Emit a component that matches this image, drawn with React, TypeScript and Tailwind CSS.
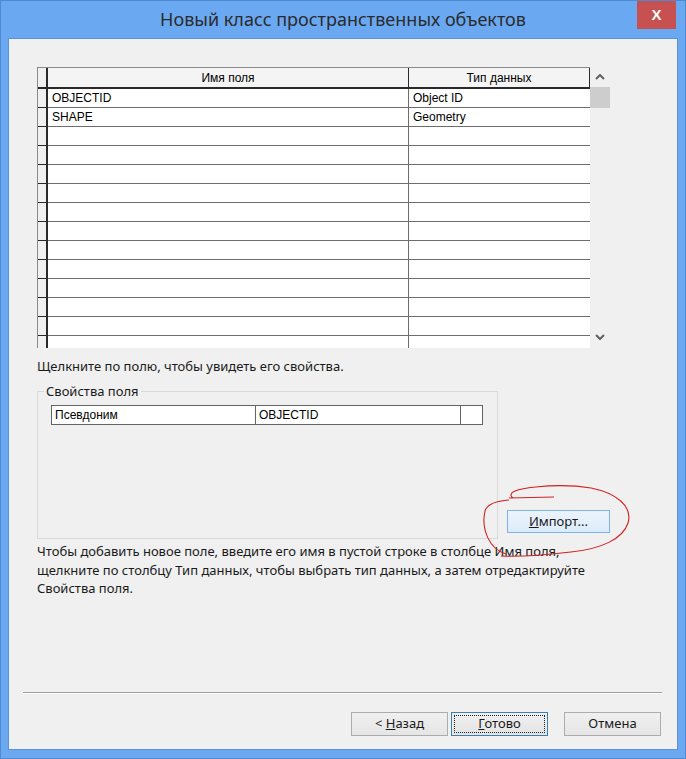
import React from 'react';

const ui = { fontFamily: '"Noto Sans", "Open Sans", sans-serif' };
const grid = { fontFamily: '"Liberation Sans", Arial, sans-serif' };

const rows: [string, string][] = [
  ['OBJECTID', 'Object ID'],
  ['SHAPE', 'Geometry'],
  ...Array.from({ length: 13 }, () => ['', ''] as [string, string]),
];

const Chevron = ({ down }: { down?: boolean }) => (
  <svg width="10" height="6" viewBox="0 0 10 6">
    <polyline
      points={down ? '1,1 5,5 9,1' : '1,5 5,1 9,5'}
      fill="none"
      stroke="#606060"
      strokeWidth="2"
    />
  </svg>
);

const Btn = ({ children, focus }: { children: React.ReactNode; focus?: boolean }) => (
  <button
    className={`w-[97px] h-[24px] text-[13px] text-[#1a1a1a] flex items-center justify-center border ${
      focus ? 'border-[#3c7fb1] bg-gradient-to-b from-[#f0f0f0] to-[#e3e3e3] p-[2px]' : 'border-[#acacac] bg-gradient-to-b from-[#f0f0f0] to-[#e5e5e5]'
    }`}
    style={ui}
  >
    {focus ? (
      <span className="w-full h-full border border-dotted border-[#222] flex items-center justify-center">{children}</span>
    ) : (
      children
    )}
  </button>
);

export default function App() {
  return (
    <div className="relative w-[686px] h-[759px] bg-[#6aa8f1] border border-[#4f8ad0] flex flex-col overflow-hidden">
      {/* title bar */}
      <div className="relative h-[37px] flex items-center justify-center shrink-0">
        <span className="text-[18px] text-[#2b2b2b]" style={ui}>
          Новый класс пространственных объектов
        </span>
        <div className="absolute right-[9px] top-0 w-[39px] h-[28px] bg-[#c75050] flex items-center justify-center">
          <span className="text-white text-[15px] font-bold" style={grid}>X</span>
        </div>
      </div>

      {/* client */}
      <div className="mx-[7px] mb-[8px] flex-1 bg-[#f0f0f0] border border-[#5b93d6] flex flex-col">
        <div className="pl-[28px] pt-[28px] flex flex-col">
          {/* grid + scrollbar */}
          <div className="flex">
            <div className="w-[553px] h-[281px] overflow-hidden bg-white border-l border-t border-[#8a8a8a] text-[12px] text-black" style={grid}>
              <div className="flex h-[21px] bg-[#f4f4f4]">
                <div className="w-[10px] border-r-2 border-b-2 border-[#2a2a2a] bg-[#f0f0f0]" />
                <div className="w-[361px] border-r border-b-2 border-[#2a2a2a] flex items-center justify-center">Имя поля</div>
                <div className="flex-1 border-b-2 border-r border-[#2a2a2a] flex items-center justify-center">Тип данных</div>
              </div>
              {rows.map(([a, b], i) => (
                <div key={i} className="flex h-[19px]">
                  <div className="w-[10px] border-r-2 border-b border-[#2a2a2a] bg-[#f0f0f0]" />
                  <div className="w-[361px] border-r border-b border-[#6d6d6d] pl-[4px] flex items-center">{a}</div>
                  <div className="flex-1 border-b border-[#6d6d6d] pl-[4px] flex items-center">{b}</div>
                </div>
              ))}
            </div>
            <div className="w-[20px] h-[281px] flex flex-col items-center">
              <div className="h-[20px] flex items-center justify-center"><Chevron /></div>
              <div className="w-[20px] h-[21px] bg-[#cdcdcd]" />
              <div className="flex-1" />
              <div className="h-[22px] flex items-center justify-center"><Chevron down /></div>
            </div>
          </div>

          <div className="mt-[10px] h-[16px] text-[13px] leading-[16px] text-[#1a1a1a]" style={ui}>
            Щелкните по полю, чтобы увидеть его свойства.
          </div>

          {/* group box + import */}
          <div className="mt-[17px] flex items-end">
            <div className="relative w-[461px] h-[148px] border border-[#d9d9d9] pl-[13px] pt-[13px]">
              <span className="absolute left-[6px] -top-[9px] px-[2px] bg-[#f0f0f0] text-[13px] leading-[16px] text-[#1a1a1a]" style={ui}>
                Свойства поля
              </span>
              <div className="flex w-[432px] h-[20px] bg-white border border-[#646464] text-[12px] text-black" style={grid}>
                <div className="w-[204px] border-r border-[#646464] pl-[3px] flex items-center">Псевдоним</div>
                <div className="w-[205px] border-r border-[#646464] pl-[3px] flex items-center">OBJECTID</div>
                <div className="flex-1" />
              </div>
            </div>
            <button
              className="ml-[9px] mb-[6px] w-[103px] h-[23px] border border-[#7eb4ea] bg-gradient-to-b from-[#ecf4fc] to-[#dcecfc] text-[13px] text-[#1a1a1a] flex items-center justify-center"
              style={ui}
            >
              <span><span className="underline">И</span>мпорт...</span>
            </button>
          </div>

          <div className="mt-[3px] text-[13px] leading-[18.5px] text-[#1a1a1a] w-[620px]" style={ui}>
            Чтобы добавить новое поле, введите его имя в пустой строке в столбце Имя поля,
            <br />
            щелкните по столбцу Тип данных, чтобы выбрать тип данных, а затем отредактируйте
            <br />
            Свойства поля.
          </div>
        </div>

        <div className="flex-1" />

        {/* footer */}
        <div className="ml-[14px] mr-[15px] border-t border-[#a0a0a0] border-b border-b-white" />
        <div className="mt-[18px] mb-[13px] mr-[16px] flex justify-end">
          <Btn>
            <span>&lt; <span className="underline">Н</span>азад</span>
          </Btn>
          <div className="ml-[3px]">
            <Btn focus>
              <span><span className="underline">Г</span>отово</span>
            </Btn>
          </div>
          <div className="ml-[16px]">
            <Btn>Отмена</Btn>
          </div>
        </div>
      </div>

      {/* red hand-drawn annotation */}
      <svg className="absolute left-0 top-0 pointer-events-none" width="686" height="759" viewBox="0 0 686 759">
        <path
          d="M508 497 L553 496 M512 497 C498 486 560 482 590 487 C615 492 632 505 627 522 C622 538 600 548 570 551 C545 554 520 556 500 555 M505 553 C488 548 480 528 484 510 C486 503 495 500 508 499"
          fill="none"
          stroke="#d42020"
          strokeWidth="1.1"
        />
      </svg>
    </div>
  );
}
